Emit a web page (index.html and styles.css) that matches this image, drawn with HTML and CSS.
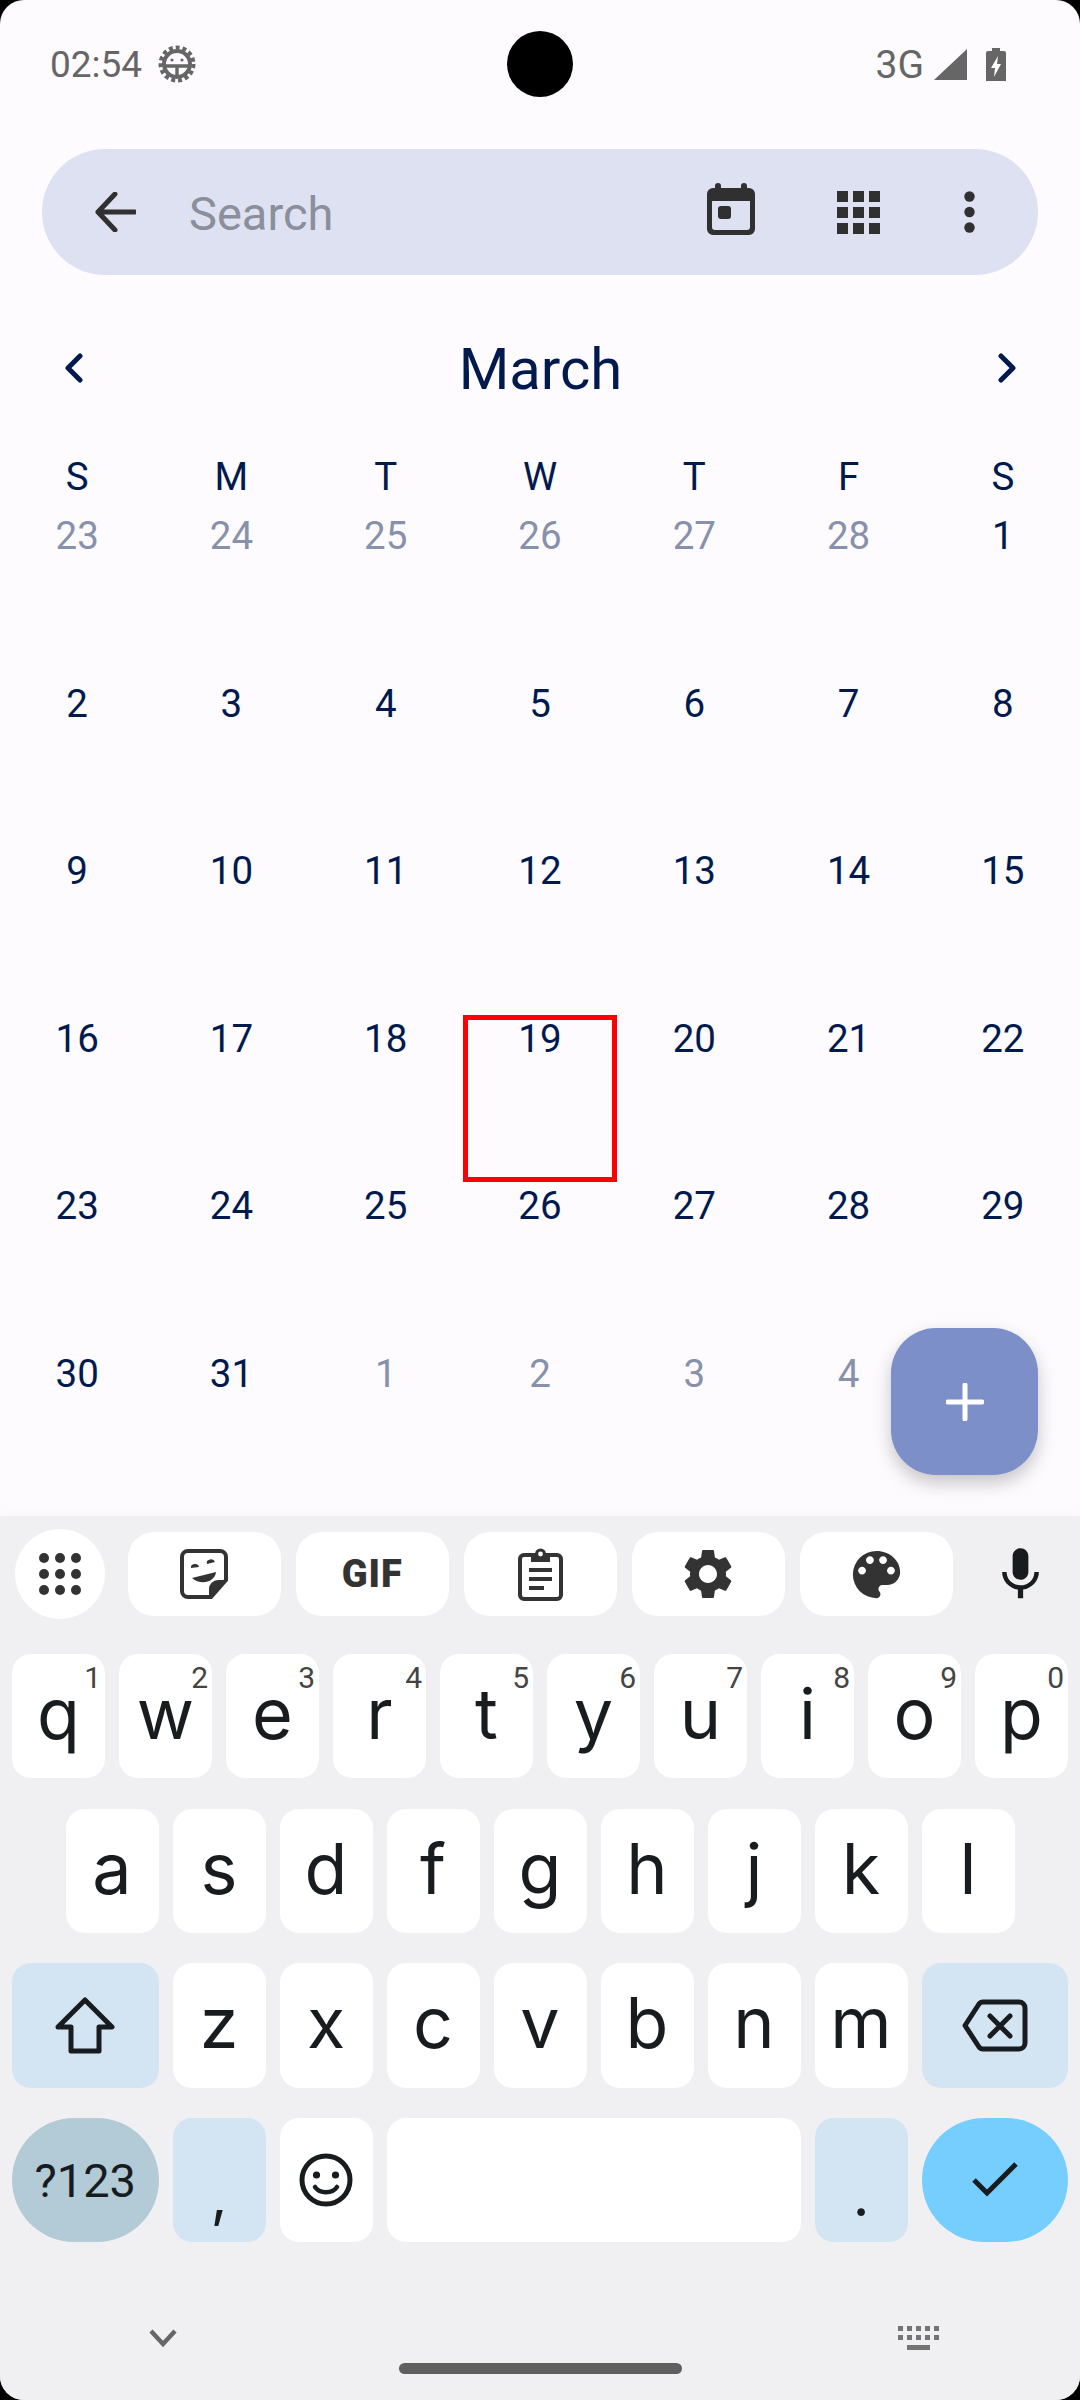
FILE: index.html
```html
<!DOCTYPE html>
<html lang="en">
    <head>
        <meta charset="UTF-8" />
        <meta name="viewport" content="width=device-width, initial-scale=1.0" />
        <title>Calendar</title>
        <link rel="stylesheet" href="styles.css">
    </head>
    <body>
        <div class="screen">
            <div class="camera"></div>

            <div class="status">
                <div class="status-left">
                    <span class="clock">02:54</span>
                    <svg class="debug" width="38" height="38" viewBox="0 0 38 38">
                        <circle cx="19" cy="19" r="16.5" fill="none" stroke="#666" stroke-width="4" stroke-dasharray="4 2.9"/>
                        <circle cx="19" cy="19" r="13" fill="none" stroke="#666" stroke-width="4"/>
                        <path d="M6 21 H32 M19 21 V32" stroke="#666" stroke-width="3.4" fill="none"/>
                        <circle cx="14" cy="15" r="1.6" fill="#666"/>
                        <circle cx="24" cy="15" r="1.6" fill="#666"/>
                    </svg>
                </div>
                <div class="status-right">
                    <span class="net">3G</span>
                    <svg width="33" height="31" viewBox="0 0 33 31"><path d="M33 0 V31 H0 Z" fill="#666"/></svg>
                    <svg class="battery" width="20" height="33" viewBox="0 0 20 33">
                        <path d="M6 0 H14 V3 H18 a2 2 0 0 1 2 2 V33 H0 V5 a2 2 0 0 1 2-2 H6 Z" fill="#666"/>
                        <path d="M12 8 L5 20 H9 L8 29 L15 16 H11 Z" fill="#fff"/>
                    </svg>
                </div>
            </div>

            <div class="search">
                <svg class="search-back" width="41" height="40" viewBox="0 0 41 40">
                    <path d="M20 2 L3 20 L20 38 M3 20 H40" fill="none" stroke="#303030" stroke-width="5" stroke-linecap="round" stroke-linejoin="round"/>
                </svg>
                <span class="search-text">Search</span>
                <svg class="search-cal" width="48" height="52" viewBox="0 0 48 52">
                    <path d="M11 0 a3 3 0 0 1 3 3 V5 H34 V3 a3 3 0 0 1 6 0 V5 H42 a6 6 0 0 1 6 6 V46 a6 6 0 0 1-6 6 H6 a6 6 0 0 1-6-6 V11 a6 6 0 0 1 6-6 H8 V3 a3 3 0 0 1 3-3 Z M5 18 V44 a3 3 0 0 0 3 3 H40 a3 3 0 0 0 3-3 V18 Z" fill="#303030" fill-rule="evenodd"/>
                    <rect x="11" y="23" width="13" height="13" rx="3" fill="#303030"/>
                </svg>
                <svg class="search-grid" width="43" height="43" viewBox="0 0 43 43" fill="#303030">
                    <rect width="11" height="11"/><rect x="16" width="11" height="11"/><rect x="32" width="11" height="11"/>
                    <rect y="16" width="11" height="11"/><rect x="16" y="16" width="11" height="11"/><rect x="32" y="16" width="11" height="11"/>
                    <rect y="32" width="11" height="11"/><rect x="16" y="32" width="11" height="11"/><rect x="32" y="32" width="11" height="11"/>
                </svg>
                <svg class="search-more" width="11" height="42" viewBox="0 0 11 42" fill="#303030">
                    <circle cx="5.5" cy="5.5" r="5.2"/><circle cx="5.5" cy="21" r="5.2"/><circle cx="5.5" cy="36.5" r="5.2"/>
                </svg>
            </div>

            <div class="month">
                <svg width="18" height="30" viewBox="0 0 18 30"><path d="M15 3 L3 15 L15 27" fill="none" stroke="#001a4d" stroke-width="5" stroke-linecap="round" stroke-linejoin="round"/></svg>
                <span class="month-name">March</span>
                <svg width="18" height="30" viewBox="0 0 18 30"><path d="M3 3 L15 15 L3 27" fill="none" stroke="#001a4d" stroke-width="5" stroke-linecap="round" stroke-linejoin="round"/></svg>
            </div>

            <div class="weekdays">
                <span>S</span><span>M</span><span>T</span><span>W</span><span>T</span><span>F</span><span>S</span>
            </div>

            <div class="days">
                <div class="day other">23</div><div class="day other">24</div><div class="day other">25</div><div class="day other">26</div><div class="day other">27</div><div class="day other">28</div><div class="day">1</div>
                <div class="day">2</div><div class="day">3</div><div class="day">4</div><div class="day">5</div><div class="day">6</div><div class="day">7</div><div class="day">8</div>
                <div class="day">9</div><div class="day">10</div><div class="day">11</div><div class="day">12</div><div class="day">13</div><div class="day">14</div><div class="day">15</div>
                <div class="day">16</div><div class="day">17</div><div class="day">18</div><div class="day today">19</div><div class="day">20</div><div class="day">21</div><div class="day">22</div>
                <div class="day">23</div><div class="day">24</div><div class="day">25</div><div class="day">26</div><div class="day">27</div><div class="day">28</div><div class="day">29</div>
                <div class="day">30</div><div class="day">31</div><div class="day other">1</div><div class="day other">2</div><div class="day other">3</div><div class="day other">4</div><div class="day other">5</div>
            </div>

            <div class="fab">
                <svg width="38" height="38" viewBox="0 0 38 38"><path d="M19 2 V36 M2 19 H36" stroke="#fff" stroke-width="5" stroke-linecap="round"/></svg>
            </div>

            <div class="keyboard">
                <div class="toolbar">
                    <div class="tool-circle">
                        <svg width="42" height="42" viewBox="0 0 42 42" fill="#333">
                            <circle cx="5" cy="5" r="5"/><circle cx="21" cy="5" r="5"/><circle cx="37" cy="5" r="5"/>
                            <circle cx="5" cy="21" r="5"/><circle cx="21" cy="21" r="5"/><circle cx="37" cy="21" r="5"/>
                            <circle cx="5" cy="37" r="5"/><circle cx="21" cy="37" r="5"/><circle cx="37" cy="37" r="5"/>
                        </svg>
                    </div>
                    <div class="tool">
                        <svg width="48" height="50" viewBox="0 0 48 50">
                            <path d="M8 2 H40 a6 6 0 0 1 6 6 V31 L31 48 H8 a6 6 0 0 1-6-6 V8 a6 6 0 0 1 6-6 Z" fill="none" stroke="#333" stroke-width="4"/>
                            <path d="M46 31 H38 a9 9 0 0 0-9 9 V48 H32 Z" fill="#333"/>
                            <path d="M11 19 a4 3.4 0 0 1 8 -1 Z M27 15 a4 3.4 0 0 1 8 -2 Z" fill="#333"/>
                            <path d="M12 29 L36 23 C35 33 21 37 12 29 Z" fill="#333"/>
                        </svg>
                    </div>
                    <div class="tool"><span class="gif">GIF</span></div>
                    <div class="tool">
                        <svg width="45" height="54" viewBox="0 0 45 54">
                            <rect x="2" y="8" width="41" height="44" rx="4" fill="none" stroke="#333" stroke-width="4"/>
                            <path d="M13 7 H17 a5.5 5.5 0 0 1 11 0 H32 V15 H13 Z" fill="#333"/>
                            <circle cx="22.5" cy="7" r="2.4" fill="#fff"/>
                            <path d="M11 23 H34 M11 32 H34 M11 41 H26" stroke="#333" stroke-width="4"/>
                        </svg>
                    </div>
                    <div class="tool">
                        <svg width="60" height="60" viewBox="0 0 24 24"><path fill="#333" d="M19.14 12.94c.04-.3.06-.61.06-.94 0-.32-.02-.64-.07-.94l2.03-1.58c.18-.14.23-.41.12-.61l-1.92-3.32c-.12-.22-.37-.29-.59-.22l-2.39.96c-.5-.38-1.03-.7-1.62-.94l-.36-2.54c-.04-.24-.24-.41-.48-.41h-3.84c-.24 0-.43.17-.47.41l-.36 2.54c-.59.24-1.13.57-1.62.94l-2.39-.96c-.22-.08-.47 0-.59.22L2.74 8.87c-.12.21-.08.47.12.61l2.03 1.58c-.05.3-.09.63-.09.94s.02.64.07.94l-2.03 1.58c-.18.14-.23.41-.12.61l1.92 3.32c.12.22.37.29.59.22l2.39-.96c.5.38 1.03.7 1.62.94l.36 2.54c.05.24.24.41.48.41h3.84c.24 0 .44-.17.47-.41l.36-2.54c.59-.24 1.13-.56 1.62-.94l2.39.96c.22.08.47 0 .59-.22l1.92-3.32c.12-.22.07-.47-.12-.61l-2.01-1.58zM12 15.6c-1.98 0-3.6-1.62-3.6-3.6s1.62-3.6 3.6-3.6 3.6 1.62 3.6 3.6-1.62 3.6-3.6 3.6z"/></svg>
                    </div>
                    <div class="tool">
                        <svg width="63" height="63" viewBox="0 0 24 24"><path fill="#333" d="M12 3a9 9 0 0 0 0 18c.83 0 1.5-.67 1.5-1.5 0-.39-.15-.74-.39-1.01-.23-.26-.38-.61-.38-.99 0-.83.67-1.5 1.5-1.5H16c2.76 0 5-2.24 5-5 0-4.42-4.03-8-9-8zm-5.5 9c-.83 0-1.5-.67-1.5-1.5S5.67 9 6.5 9 8 9.67 8 10.5 7.33 12 6.5 12zm3-4C8.67 8 8 7.33 8 6.5S8.67 5 9.5 5s1.5.67 1.5 1.5S10.33 8 9.5 8zm5 0c-.83 0-1.5-.67-1.5-1.5S13.67 5 14.5 5s1.5.67 1.5 1.5S15.33 8 14.5 8zm3 4c-.83 0-1.5-.67-1.5-1.5S16.67 9 17.5 9s1.5.67 1.5 1.5-.67 1.5-1.5 1.5z"/></svg>
                    </div>
                    <svg class="mic" width="63" height="63" viewBox="0 0 24 24"><path fill="#191c1e" d="M12 14c1.66 0 3-1.34 3-3V5c0-1.66-1.34-3-3-3S9 3.34 9 5v6c0 1.66 1.34 3 3 3zm5.3-3c0 3-2.54 5.1-5.3 5.1S6.7 14 6.7 11H5c0 3.41 2.72 6.23 6 6.72V21h2v-3.28c3.28-.48 6-3.3 6-6.72h-1.7z"/></svg>
                </div>

                <div class="keys">
                    <div class="key-row">
                        <div class="key">q<span class="hint">1</span></div>
                        <div class="key">w<span class="hint">2</span></div>
                        <div class="key">e<span class="hint">3</span></div>
                        <div class="key">r<span class="hint">4</span></div>
                        <div class="key">t<span class="hint">5</span></div>
                        <div class="key">y<span class="hint">6</span></div>
                        <div class="key">u<span class="hint">7</span></div>
                        <div class="key">i<span class="hint">8</span></div>
                        <div class="key">o<span class="hint">9</span></div>
                        <div class="key">p<span class="hint">0</span></div>
                    </div>
                    <div class="key-row">
                        <div class="key">a</div><div class="key">s</div><div class="key">d</div><div class="key">f</div><div class="key">g</div><div class="key">h</div><div class="key">j</div><div class="key">k</div><div class="key">l</div>
                    </div>
                    <div class="key-row">
                        <div class="key wide blue">
                            <svg width="60" height="57" viewBox="0 0 60 57"><path d="M30 3 L57 30 H44 V54 H16 V30 H3 Z" fill="none" stroke="#191c1e" stroke-width="5" stroke-linejoin="round"/></svg>
                        </div>
                        <div class="key">z</div><div class="key">x</div><div class="key">c</div><div class="key">v</div><div class="key">b</div><div class="key">n</div><div class="key">m</div>
                        <div class="key wide blue">
                            <svg width="66" height="53" viewBox="0 0 66 53">
                                <path d="M21 3 H57 a6 6 0 0 1 6 6 V44 a6 6 0 0 1-6 6 H21 a5 5 0 0 1-4-2 L3 26.5 L17 5 a5 5 0 0 1 4-2 Z" fill="none" stroke="#191c1e" stroke-width="5" stroke-linejoin="round"/>
                                <path d="M28 17 L48 37 M48 17 L28 37" stroke="#191c1e" stroke-width="5" stroke-linecap="round"/>
                            </svg>
                        </div>
                    </div>
                    <div class="key-row">
                        <div class="key wide round grey"><span class="sym">?123</span></div>
                        <div class="key blue"><span class="punct">,</span></div>
                        <div class="key">
                            <svg width="54" height="54" viewBox="0 0 54 54" fill="none" stroke="#191c1e">
                                <circle cx="27" cy="27" r="24" stroke-width="5"/>
                                <circle cx="17.5" cy="22" r="3.6" fill="#191c1e" stroke="none"/>
                                <circle cx="36.5" cy="22" r="3.6" fill="#191c1e" stroke="none"/>
                                <path d="M16 34 C21 41 33 41 38 34" stroke-width="4.5" stroke-linecap="round"/>
                            </svg>
                        </div>
                        <div class="key space"></div>
                        <div class="key blue"><span class="punct">.</span></div>
                        <div class="key wide round accent">
                            <svg width="46" height="35" viewBox="0 0 46 35"><path d="M2 18 L15 31 L44 2" fill="none" stroke="#191c1e" stroke-width="5"/></svg>
                        </div>
                    </div>
                </div>

                <div class="kb-nav">
                    <svg width="28" height="18" viewBox="0 0 28 18"><path d="M2 2 L14 15 L26 2" fill="none" stroke="#666" stroke-width="4.4"/></svg>
                    <svg width="41" height="24" viewBox="0 0 41 24" fill="#747474">
                        <rect width="5" height="5"/><rect x="9" width="5" height="5"/><rect x="18" width="5" height="5"/><rect x="27" width="5" height="5"/><rect x="36" width="5" height="5"/>
                        <rect y="9" width="5" height="5"/><rect x="9" y="9" width="5" height="5"/><rect x="18" y="9" width="5" height="5"/><rect x="27" y="9" width="5" height="5"/><rect x="36" y="9" width="5" height="5"/>
                        <rect x="9" y="19" width="23" height="5"/>
                    </svg>
                </div>
                <div class="home-bar"></div>
            </div>
        </div>
    </body>
</html>
```

FILE: styles.css
```css
html, body {
    margin: 0;
    background: #000;
}

.screen {
    position: relative;
    display: flex;
    flex-direction: column;
    width: 1080px;
    height: 2400px;
    overflow: hidden;
    border-radius: 24px;
    background: #fefbff;
    font-family: Roboto, "Noto Sans", sans-serif;
}

.camera {
    position: absolute;
    left: 507px;
    top: 31px;
    width: 66px;
    height: 66px;
    border-radius: 50%;
    background: #000;
}

/* status bar */
.status {
    display: flex;
    flex: none;
    justify-content: space-between;
    align-items: center;
    height: 128px;
    padding: 0 74px 0 50px;
    color: #666;
    font-size: 37px;
    line-height: 40px;
}

.status-left, .status-right {
    display: flex;
    align-items: center;
}

.clock, .net {
    padding-top: 2px;
}

.debug {
    margin-left: 16px;
}

.net {
    margin-right: 10px;
    font-size: 39px;
}

.battery {
    margin-left: 19px;
}

/* search bar */
.search {
    display: flex;
    flex: none;
    align-items: center;
    height: 126px;
    margin: 21px 42px 0;
    padding-left: 53px;
    border-radius: 63px;
    background: #dde1f1;
}

.search-text {
    flex: 1;
    margin-left: 53px;
    padding-top: 2px;
    color: #8b8e9b;
    font-size: 47px;
}

.search-cal {
    margin-bottom: 6px;
    margin-right: 1px;
}

.search-grid {
    margin-left: 81px;
}

.search-more {
    margin-left: 84px;
    margin-right: 63px;
}

/* calendar */
.month {
    display: flex;
    flex: none;
    justify-content: space-between;
    align-items: center;
    height: 100px;
    margin-top: 43px;
    padding: 0 64px 0 65px;
}

.month-name {
    padding-top: 2px;
    color: #001a4d;
    font-size: 58px;
}

.weekdays {
    display: grid;
    flex: none;
    grid-template-columns: repeat(7, 1fr);
    height: 52px;
    margin-top: 42px;
    color: #001a4d;
    font-size: 38.5px;
    line-height: 34px;
    text-align: center;
}

.days {
    display: grid;
    flex: none;
    grid-template-columns: repeat(7, 1fr);
    grid-auto-rows: 167.6px;
    height: 1004px;
    overflow: hidden;
}

.day {
    color: #001a4d;
    font-size: 38.5px;
    line-height: 48px;
    text-align: center;
}

.other {
    color: #8791ab;
}

.today {
    box-shadow: inset 0 0 0 5px #f00;
}

.fab {
    position: absolute;
    left: 891px;
    top: 1328px;
    display: flex;
    justify-content: center;
    align-items: center;
    width: 147px;
    height: 147px;
    border-radius: 45px;
    background: #7c8fc8;
    box-shadow: 0 8px 18px rgba(0, 0, 0, 0.22);
}

/* keyboard */
.keyboard {
    position: relative;
    flex: 1;
    background: #f0f0f2;
    box-shadow: 0 -3px 8px rgba(0, 0, 0, 0.02);
}

.toolbar {
    display: flex;
    align-items: center;
    height: 90px;
    margin-top: 13px;
    padding-left: 15px;
}

.tool-circle {
    display: flex;
    justify-content: center;
    align-items: center;
    width: 90px;
    height: 90px;
    margin-right: 7.5px;
    border-radius: 50%;
    background: #fff;
}

.tool {
    display: flex;
    justify-content: center;
    align-items: center;
    width: 152.5px;
    height: 84px;
    margin-left: 15.5px;
    border-radius: 26px;
    background: #fff;
}

.gif {
    color: #333;
    font-size: 38px;
    font-weight: 900;
    letter-spacing: 1px;
}

.mic {
    margin-left: 36px;
}

.keys {
    display: flex;
    flex-direction: column;
    gap: 30.2px;
    margin-top: 35px;
}

.key-row {
    display: flex;
    justify-content: center;
    gap: 14px;
    height: 124.4px;
    padding: 0 12px;
}

.key {
    position: relative;
    display: flex;
    justify-content: center;
    align-items: flex-start;
    flex: none;
    width: 93px;
    border-radius: 19px;
    background: #fff;
    color: #191c1e;
    font-family: Inter, Roboto, sans-serif;
    font-size: 70px;
    line-height: 120px;
}

.key svg {
    align-self: center;
}

.wide {
    width: 146.5px;
}

.space {
    flex: 1;
}

.blue {
    background: #d3e4f3;
}

.round {
    border-radius: 62px;
    align-items: center;
}

.grey {
    background: #b3cad7;
}

.accent {
    background: #76cefe;
}

.sym {
    padding-top: 2px;
    font-family: Roboto, sans-serif;
    font-size: 47px;
    line-height: 1;
}

.punct {
    font-size: 58px;
    line-height: 124px;
    padding-top: 15px;
}

.hint {
    position: absolute;
    top: 9px;
    right: 4px;
    color: #444;
    font-family: Roboto, sans-serif;
    font-size: 30px;
    line-height: 30px;
}

.kb-nav {
    display: flex;
    justify-content: space-between;
    align-items: center;
    height: 40px;
    margin-top: 76px;
    padding: 0 141px 0 149px;
}

.home-bar {
    width: 283px;
    height: 11px;
    margin: 5px auto 0;
    border-radius: 6px;
    background: #5f5f5f;
}
```
